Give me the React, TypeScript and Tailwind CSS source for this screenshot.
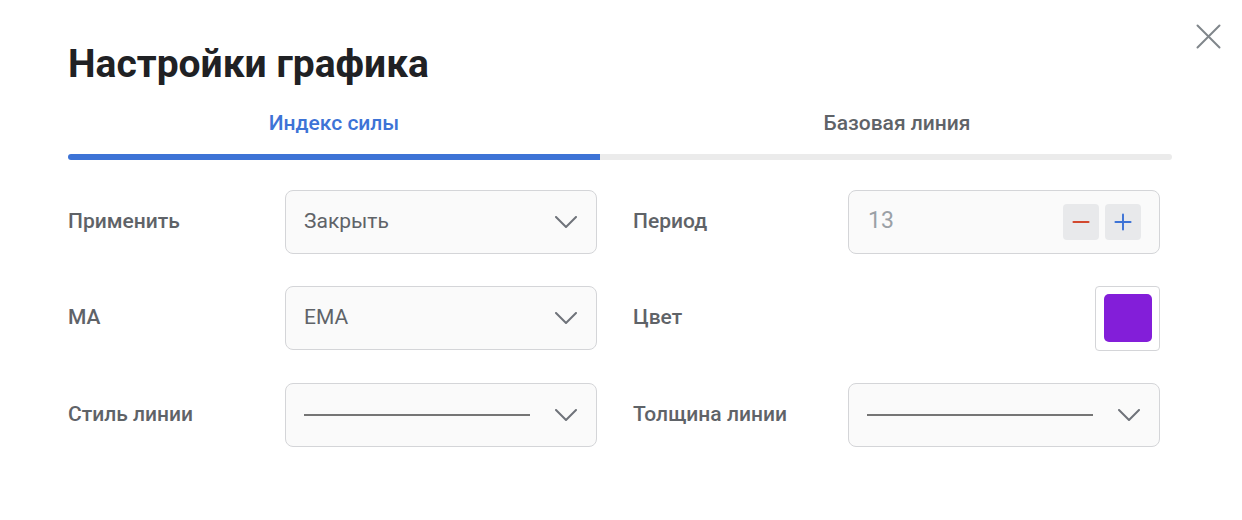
import { Minus, Plus } from "lucide-react";

const FONT = { fontFamily: "Roboto, 'Noto Sans', sans-serif" };

function Chevron() {
  return (
    <svg width="22" height="12" viewBox="0 0 22 12" fill="none" className="shrink-0">
      <polyline points="1,1 11,11 21,1" stroke="#6f737a" strokeWidth="2" strokeLinecap="round" strokeLinejoin="round" />
    </svg>
  );
}

function SelectBox({ children }: { children: React.ReactNode }) {
  return (
    <div className="flex h-[64px] w-[312px] items-center justify-between rounded-lg border border-[#d4d5d8] bg-[#fafafa] pl-[18px] pr-[19px]">
      <div className="flex-1 text-[21px] text-[#5f6368]">{children}</div>
      <Chevron />
    </div>
  );
}

function LineSample() {
  return <div className="h-[2px] w-[226px] bg-[#757575]" />;
}

function Row({ label, labelWidth, children }: { label: string; labelWidth: string; children: React.ReactNode }) {
  return (
    <div className="flex items-center">
      <div className={`${labelWidth} text-[21px] font-medium text-[#5f6368]`}>{label}</div>
      {children}
    </div>
  );
}

export default function App() {
  return (
    <div className="relative h-[520px] w-[1242px] bg-white" style={FONT}>
      <button className="absolute left-[1196px] top-[24px]">
        <svg width="25" height="25" viewBox="0 0 25 25" fill="none">
          <path d="M1.5 1.5 L23.5 23.5 M23.5 1.5 L1.5 23.5" stroke="#80868b" strokeWidth="2" strokeLinecap="round" />
        </svg>
      </button>

      <div className="pl-[68px] pr-[70px] pt-[39px]">
        <h1 className="text-[39px] font-bold leading-[50px] text-[#202124]">Настройки графика</h1>

        <div className="mt-[19px] flex">
          <div className="w-[532px]">
            <div className="pb-[14px] text-center text-[21px] font-medium text-[#3d73d6]">Индекс силы</div>
            <div className="h-[6px] rounded-l-full bg-[#3d73d6]" />
          </div>
          <div className="flex-1">
            <div className="pb-[14px] pl-[22px] text-center text-[21px] font-medium text-[#5f6368]">Базовая линия</div>
            <div className="h-[6px] rounded-r-full bg-[#ebebeb]" />
          </div>
        </div>

        <div className="mt-[30px] grid grid-cols-[565px_1fr] gap-y-[32px]">
          <Row label="Применить" labelWidth="w-[217px]">
            <SelectBox>Закрыть</SelectBox>
          </Row>
          <Row label="Период" labelWidth="w-[215px]">
            <div className="flex h-[64px] w-[312px] items-center justify-between rounded-lg border border-[#d4d5d8] bg-[#fafafa] pl-[19px] pr-[18px]">
              <span className="text-[23px] text-[#9aa0a6]">13</span>
              <div className="flex gap-[6px]">
                <button className="flex h-[36px] w-[36px] items-center justify-center rounded bg-[#e8e9eb] text-[#d2482e]">
                  <Minus size={26} strokeWidth={1.8} />
                </button>
                <button className="flex h-[36px] w-[36px] items-center justify-center rounded bg-[#e8e9eb] text-[#3d73d6]">
                  <Plus size={26} strokeWidth={1.8} />
                </button>
              </div>
            </div>
          </Row>

          <Row label="MA" labelWidth="w-[217px]">
            <SelectBox>EMA</SelectBox>
          </Row>
          <Row label="Цвет" labelWidth="w-[215px]">
            <div className="flex w-[312px] justify-end">
              <div className="flex h-[65px] w-[65px] items-center justify-center rounded-sm border border-[#d4d5d8] bg-white">
                <div className="h-[48px] w-[48px] rounded-[5px] bg-[#831ed9]" />
              </div>
            </div>
          </Row>

          <Row label="Стиль линии" labelWidth="w-[217px]">
            <SelectBox>
              <LineSample />
            </SelectBox>
          </Row>
          <Row label="Толщина линии" labelWidth="w-[215px]">
            <SelectBox>
              <LineSample />
            </SelectBox>
          </Row>
        </div>
      </div>
    </div>
  );
}
